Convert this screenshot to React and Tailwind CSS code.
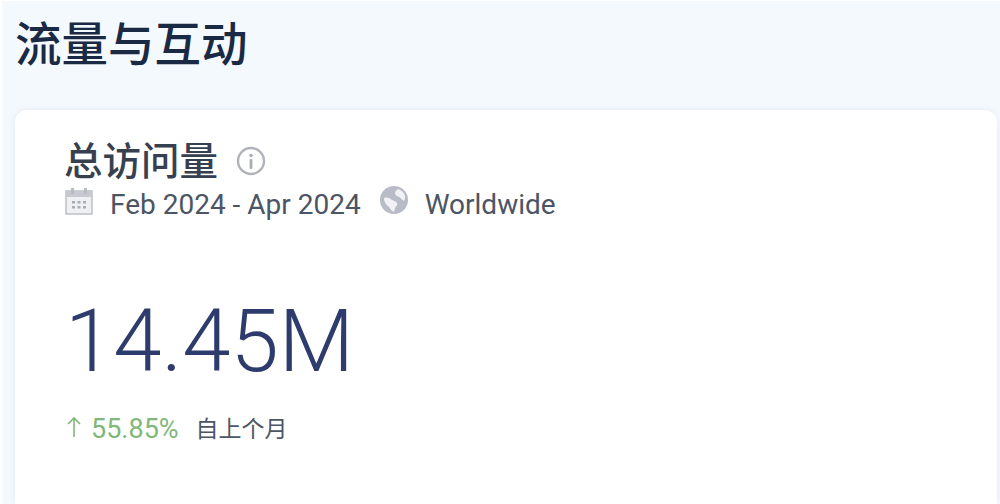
import React from 'react';

const cjk = "font-['Noto_Sans_CJK_SC',sans-serif]";
const roboto = "font-['Roboto','Noto_Sans_CJK_SC',sans-serif]";

const InfoIcon = () => (
  <svg width="30" height="30" viewBox="0 0 30 30" fill="none" className="shrink-0">
    <circle cx="15" cy="15" r="13" stroke="#b0b4b9" strokeWidth="2.4" />
    <circle cx="15" cy="9.5" r="1.7" fill="#a9adb3" />
    <rect x="13.6" y="13" width="2.8" height="10" rx="1" fill="#a9adb3" />
  </svg>
);

const CalendarIcon = () => (
  <svg width="28" height="28" viewBox="0 0 28 28" className="shrink-0">
    <path d="M1 4h26v23H1z" fill="#eef0f3" stroke="#bcc0c6" strokeWidth="1.5" />
    <path d="M1 4h26v6H1z" fill="#c6c9cf" />
    <rect x="6" y="1" width="3" height="6" fill="#b9bdc3" />
    <rect x="19" y="1" width="3" height="6" fill="#b9bdc3" />
    <g fill="#a8acb4">
      <rect x="7" y="14" width="3" height="2.5" />
      <rect x="12.5" y="14" width="3" height="2.5" />
      <rect x="18" y="14" width="3" height="2.5" />
      <rect x="7" y="19" width="3" height="2.5" />
      <rect x="12.5" y="19" width="3" height="2.5" />
      <rect x="18" y="19" width="3" height="2.5" />
    </g>
  </svg>
);

const GlobeIcon = () => (
  <svg width="30" height="30" viewBox="0 0 30 30" className="shrink-0">
    <circle cx="15" cy="15" r="14" fill="#b7bcc7" />
    <path d="M5 13c3-1 6 0 8 2 2 1 4 1 5 3s-1 3-2 5l-1 4c-2-1-4-3-5-5-2-2-4-3-4-5-1-1-1-3-1-4z" fill="#f1f2f5" />
    <path d="M19 4c3 1 6 3 7 7 0 2 0 4-1 5-2-1-3-3-5-4-2-1-4-2-4-4s2-3 3-4z" fill="#f1f2f5" />
  </svg>
);

const UpArrow = () => (
  <svg width="16" height="22" viewBox="0 0 16 22" fill="none" stroke="#7fb87a" strokeWidth="1.6" className="shrink-0">
    <path d="M8 21V2M2 8l6-6 6 6" />
  </svg>
);

export default function App() {
  return (
    <div className="h-[504px] w-[1000px] overflow-hidden border-t border-l-2 border-white bg-[#f4f9fd] pr-[3px] pl-[13px]">
      <h1 className={`${cjk} h-[109px] pt-[7px] text-[46.5px] leading-[66px] font-medium text-[#1b2a44]`}>流量与互动</h1>
      <div className="h-[394px] rounded-t-xl bg-white pl-[50px] shadow-[0_0_6px_rgba(200,212,225,0.35)]">
        <div className="flex items-center gap-[18px] pt-[21px]">
          <h2 className={`${cjk} -ml-[1px] text-[38.5px] leading-[55px] font-medium text-[#37404e]`}>总访问量</h2>
          <span className="translate-y-[2px]"><InfoIcon /></span>
        </div>
        <div className={`${roboto} flex h-[36px] items-center text-[28px] leading-[36px] text-[#4b5563]`}>
          <span className="-translate-y-[3px]"><CalendarIcon /></span>
          <span className="ml-[17px] translate-y-[1px]">Feb 2024 - Apr 2024</span>
          <span className="ml-[18px] -translate-y-[4px]"><GlobeIcon /></span>
          <span className="ml-[16px] translate-y-[1px]">Worldwide</span>
        </div>
        <div className={`${roboto} mt-[68px] text-[87px] leading-[102px] font-light text-[#2d3c6c]`}>14.45M</div>
        <div className={`${roboto} mt-[18px] flex items-center text-[27px] leading-[34px] text-[#7fb87a]`}>
          <span className="mr-[9px] ml-[1px]"><UpArrow /></span>
          <span className="translate-y-[2px]">55.85%</span>
          <span className={`${cjk} ml-[17px] text-[23px] text-[#4b5563]`}>自上个月</span>
        </div>
      </div>
    </div>
  );
}
